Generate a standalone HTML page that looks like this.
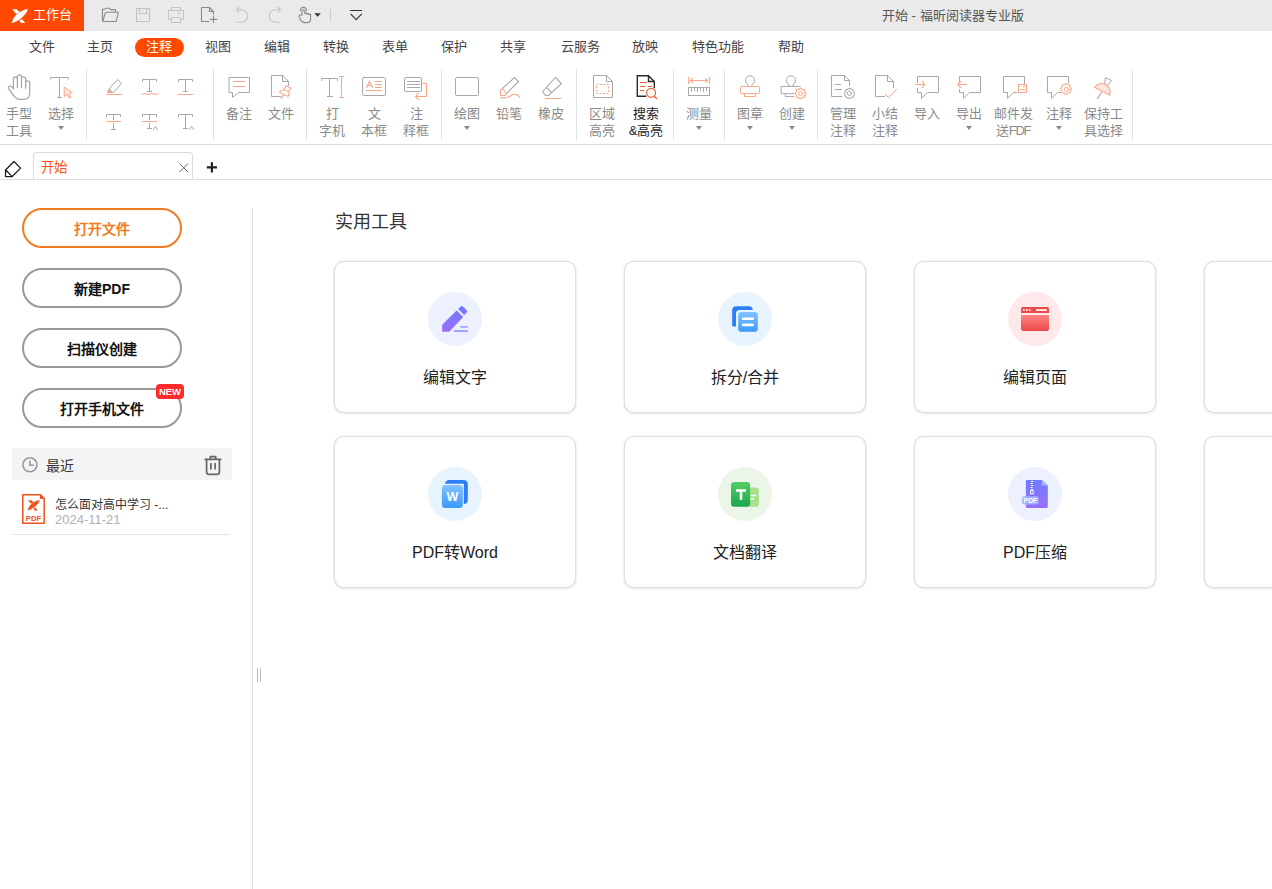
<!DOCTYPE html>
<html lang="zh-CN">
<head>
<meta charset="utf-8">
<style>
*{margin:0;padding:0;box-sizing:border-box}
html,body{width:1272px;height:889px;overflow:hidden;background:#fff;font-family:"Liberation Sans",sans-serif;}
.abs{position:absolute}
#title{position:absolute;left:0;top:0;width:1272px;height:31px;background:#eaeaea}
#brand{position:absolute;left:0;top:0;width:84px;height:31px;background:#ff4900;color:#fff;font-size:13px}
.t{position:absolute;white-space:nowrap;line-height:17px}
.menu{position:absolute;top:37px;font-size:13px;color:#444;line-height:19px;white-space:nowrap}
#ribbon{position:absolute;left:0;top:62px;width:1272px;height:83px;border-bottom:1px solid #dcdcdc}
.sep{position:absolute;top:7px;width:1px;height:71px;background:#e1e1e1}
.lb{position:absolute;font-size:13px;line-height:17px;color:#8a8a8a;text-align:center;white-space:nowrap}
.arr{position:absolute;width:0;height:0;border-left:3.5px solid transparent;border-right:3.5px solid transparent;border-top:4px solid #8a8a8a}
svg{position:absolute;overflow:visible}
.btn{position:absolute;left:22px;width:160px;height:40px;border:2px solid #999;border-radius:20px;font-size:14px;font-weight:bold;color:#111;text-align:center;line-height:38px}
.card{position:absolute;width:242px;height:152px;border:1px solid #e0e0e0;border-radius:10px;background:#fff;box-shadow:0 0 1.5px rgba(0,0,0,0.14),0 1px 3px rgba(0,0,0,0.08)}
.circ{position:absolute;width:54px;height:54px;border-radius:50%}
.cl{position:absolute;width:242px;text-align:center;font-size:16px;line-height:22px;color:#222;white-space:nowrap}

</style>
</head>
<body>
<div id="title">
  <div id="brand">
    <svg style="left:0;top:0" width="40" height="31" viewBox="0 0 40 31"><g fill="#fff">
<path d="M12.2 9.3 H16.6 L19.8 12.2 L16.2 14 Z"/>
<path d="M11.8 23.2 C12.6 17.5 18.5 10.8 27.9 9.1 C27 12.2 24.6 15.8 21.2 18.2 C18.6 20.2 15.2 22.2 11.8 23.2 Z"/>
<path d="M19.2 20.6 L22 19.2 L25.3 23.1 H21.2 Z"/>
</g></svg>
    <div class="t" style="left:33px;top:6px;font-size:13px;color:#fff">工作台</div>
  </div>
  
<svg style="left:0;top:0" width="1272" height="31" viewBox="0 0 1272 31">
 <g fill="none" stroke-width="1.1" stroke-linejoin="round">
  <!-- folder -->
  <path d="M102.5 21.5 V9.3 H104.5 L105.5 8.3 H109.5 L110.5 9.6 H115.5 V12.3" stroke="#8a8a8a"/>
  <path d="M102.5 21.5 H116.3 L118.3 12.3 H105.5 L102.8 21" stroke="#8a8a8a"/>
  <!-- save -->
  <rect x="136.5" y="8.5" width="13" height="13" stroke="#c2c2c2"/>
  <path d="M139.5 8.5 V13.5 H146.5 V8.5 M142.5 11 H143.5" stroke="#c2c2c2"/>
  <!-- print -->
  <path d="M171.5 10.5 V7.5 H180.5 V10.5 M171.5 19.5 H168.5 V10.5 H183.5 V19.5 H180.5" stroke="#c4c4c4"/>
  <rect x="171.5" y="17.5" width="9" height="5" stroke="#c4c4c4"/>
  <path d="M178 13.5 H180.5" stroke="#c4c4c4"/>
  <!-- new doc -->
  <path d="M209.5 21.5 H201.5 V7.5 H209.5 L213.5 11.5 V14.5 M209.5 7.5 V11.5 H213.5" stroke="#8a8a8a"/>
  <path d="M213.5 15.8 V23 M209.8 19.4 H217.2" stroke="#8a8a8a"/>
  <!-- undo -->
  <path d="M236.5 9.8 H241.5 A6.2 6.2 0 0 1 241.5 22.3 H236.5 M239.3 7 L236.5 9.8 L239.3 12.6" stroke="#c6c6c6"/>
  <!-- redo -->
  <path d="M280.5 9.8 H275.5 A6.2 6.2 0 0 0 275.5 22.3 H280.5 M277.7 7 L280.5 9.8 L277.7 12.6" stroke="#c6c6c6"/>
  <!-- hand -->
  <path d="M300.4 11.2 C300.4 6.1 306.5 6.1 306.5 11.2" stroke="#8a8a8a" stroke-width="1.1"/>
  <path d="M302.1 15.6 V11.2 A1.35 1.35 0 0 1 304.8 11.2 V14 M304.8 13.9 A1 1 0 0 1 306.8 14.2 V14.8 M306.8 14.3 A1 1 0 0 1 308.8 14.6 V15.2 M308.8 14.8 A0.9 0.9 0 0 1 310.6 15.2 V19.6 C310.6 21.6 309.4 22.6 307.4 22.6 H304.6 C302.6 22.6 301.2 21.4 300.3 19.6 L299.2 16.6 C298.9 15.6 299.6 14.8 300.5 14.8 C301.2 14.8 301.8 15.1 302.1 15.6" stroke="#8a8a8a" stroke-width="1.1"/>
  <path d="M314.3 13.2 H320.8 L317.55 16.8 Z" fill="#333" stroke="none"/>
  <path d="M330.5 9.5 V21.8" stroke="#cccccc"/>
  <!-- chevron -->
  <path d="M350 10.5 H362 M350.6 13.8 L356.2 19.6 L361.8 13.8" stroke="#333" stroke-width="1.2"/>
 </g>
</svg>
<div class="t" style="left:882px;top:7px;font-size:13px;color:#555">开始 - 福昕阅读器专业版</div>
</div>

<!-- menu -->
<div class="abs" style="left:134.5px;top:37.5px;width:49px;height:19.5px;border-radius:10px;background:#ff4800"></div>
<div class="menu" style="left:29px">文件</div>
<div class="menu" style="left:87px">主页</div>
<div class="menu" style="left:146px;color:#fff">注释</div>
<div class="menu" style="left:205px">视图</div>
<div class="menu" style="left:264px">编辑</div>
<div class="menu" style="left:323px">转换</div>
<div class="menu" style="left:382px">表单</div>
<div class="menu" style="left:441px">保护</div>
<div class="menu" style="left:500px">共享</div>
<div class="menu" style="left:561px">云服务</div>
<div class="menu" style="left:632px">放映</div>
<div class="menu" style="left:692px">特色功能</div>
<div class="menu" style="left:778px">帮助</div>

<div id="ribbon">
  <div class="sep" style="left:86px"></div>
  <div class="sep" style="left:213px"></div>
  <div class="sep" style="left:306px"></div>
  <div class="sep" style="left:441px"></div>
  <div class="sep" style="left:576px"></div>
  <div class="sep" style="left:673px"></div>
  <div class="sep" style="left:724px"></div>
  <div class="sep" style="left:817px"></div>
  <div class="sep" style="left:1132px"></div>

  <div class="lb" style="left:-1px;width:40px;top:43px">手型<br>工具</div>
  <div class="lb" style="left:41px;width:40px;top:43px">选择</div>
  <div class="arr" style="left:57.5px;top:64px"></div>
  <div class="lb" style="left:219px;width:40px;top:43px">备注</div>
  <div class="lb" style="left:261px;width:40px;top:43px">文件</div>
  <div class="lb" style="left:312px;width:40px;top:43px">打<br>字机</div>
  <div class="lb" style="left:354px;width:40px;top:43px">文<br>本框</div>
  <div class="lb" style="left:396px;width:40px;top:43px">注<br>释框</div>
  <div class="lb" style="left:447px;width:40px;top:43px">绘图</div>
  <div class="arr" style="left:463.5px;top:64px"></div>
  <div class="lb" style="left:489px;width:40px;top:43px">铅笔</div>
  <div class="lb" style="left:531px;width:40px;top:43px">橡皮</div>
  <div class="lb" style="left:582px;width:40px;top:43px">区域<br>高亮</div>
  <div class="lb" style="left:626px;width:40px;top:43px;color:#222">搜索<br>&amp;高亮</div>
  <div class="lb" style="left:679px;width:40px;top:43px">测量</div>
  <div class="arr" style="left:695.5px;top:64px"></div>
  <div class="lb" style="left:730px;width:40px;top:43px">图章</div>
  <div class="arr" style="left:746.5px;top:64px"></div>
  <div class="lb" style="left:772px;width:40px;top:43px">创建</div>
  <div class="arr" style="left:788.5px;top:64px"></div>
  <div class="lb" style="left:823px;width:40px;top:43px">管理<br>注释</div>
  <div class="lb" style="left:865px;width:40px;top:43px">小结<br>注释</div>
  <div class="lb" style="left:907px;width:40px;top:43px">导入</div>
  <div class="lb" style="left:949px;width:40px;top:43px">导出</div>
  <div class="arr" style="left:965.5px;top:64px"></div>
  <div class="lb" style="left:993px;width:40px;top:43px">邮件发<br>送<span style="letter-spacing:-1.2px">FDF</span></div>
  <div class="lb" style="left:1039px;width:40px;top:43px">注释</div>
  <div class="arr" style="left:1055.5px;top:64px"></div>
  <div class="lb" style="left:1083px;width:40px;top:43px">保持工<br>具选择</div>
</div>


<svg style="left:0;top:0" width="1272" height="150" viewBox="0 0 1272 150">
 <g fill="none" stroke="#a8a8a8" stroke-width="1" stroke-linejoin="miter" stroke-linecap="square">
  <!-- hand tool -->
  <path stroke-width="1.3" stroke-linejoin="round" d="M13.4 88.5 V79 A2 2 0 0 1 17.4 79 V87.5 M17.4 87.5 V77 A2 2 0 0 1 21.5 77 V87.5 M21.5 87.5 V79 A2 2 0 0 1 25.6 79 V88 M25.6 88 V83 A2 2 0 0 1 29.7 83 V93 C29.7 97 27.5 99.4 23.5 99.4 H19.5 C17 99.4 15.5 98.2 14 96 L8.6 88.6 C8 87.6 8.6 86.2 10 86.2 C11 86.2 12.3 87 13.4 88.5"/>
  <!-- select T -->
  <path d="M50.5 79 V77.5 H68.5 V79 M59.5 77.5 V97.5 M57.5 97.5 H61.5"/>
  <path d="M64.5 87.3 L72.3 92.5 L69.3 93.3 L70.7 97.3 L69.2 98.2 L67.7 94.3 L64.8 96.3 Z" stroke="#f9a689" fill="#fde9e2" stroke-linejoin="round"/>
  <!-- highlighter -->
  <path d="M109.5 88.5 L117.5 79.5 L121.5 83.5 L113.5 92.5 Z M109.5 88.5 L107.5 92.5 H111.5" />
  <path d="M108.5 92.5 L109.5 89.5 L111.5 91.5 Z" fill="#f9a689" stroke="#f9a689" stroke-width="0.8"/>
  <path d="M106.5 94.5 H121.5" stroke="#f9a689"/>
  <!-- T squiggle -->
  <path d="M142.5 81.5 V79.5 H156.5 V81.5 M149.5 79.5 V91.5 M147.5 91.5 H151.5"/>
  <path d="M142.3 94.5 Q144.2 92.8 146.1 94 T150 94 T153.9 94 T157.8 94" stroke="#f9a689" stroke-width="1"/>
  <!-- T underline -->
  <path d="M178.5 81.5 V79.5 H192.5 V81.5 M185.5 79.5 V91.5 M183.5 91.5 H187.5"/>
  <path d="M178.5 94.5 H192.5" stroke="#f9a689"/>
  <!-- strikeout T -->
  <path d="M106.5 116.5 V114.5 H120.5 V116.5 M113.5 114.5 V119.5 M113.5 123.5 V129.5 M111.5 129.5 H115.5"/>
  <path d="M106.5 121.5 H120.5" stroke="#f9a689"/>
  <!-- replace T -->
  <path d="M142.5 116.5 V114.5 H156.5 V116.5 M149.5 114.5 V119.5 M149.5 123.5 V128.5 M147.5 128.5 H151.5 M153.5 129.5 L155.5 126.5 L157.5 129.5"/>
  <path d="M142.5 121.5 H156.5" stroke="#f9a689"/>
  <!-- insert T -->
  <path d="M178.5 116.5 V114.5 H192.5 V116.5 M185.5 114.5 V128.5 M183.5 128.5 H187.5 M189.5 129.5 L191.5 126.5 L193.5 129.5"/>
  <!-- note -->
  <path d="M229.5 77.5 H249.5 V92.5 H238.5 L232.5 97.5 V92.5 H229.5 Z"/>
  <path d="M233.5 81.5 H244.5 M233.5 86.5 H244.5" stroke="#f9a689"/>
  <!-- file attach -->
  <path d="M280.5 96.5 H271.5 V75.5 H282.5 L288.5 81.5 V85.5 M282.5 75.5 V81.5 H288.5"/>
  <path d="M286.2 85.6 L290.8 88.3 L288.6 91.5 M284.2 89 L286.2 85.6 M279.5 91.5 C281 89.5 285 89.6 288.6 91.5 C289.5 93.5 289 95.5 288 96.3 C285 95.5 281 94 279.5 91.5 Z M283.4 95 L281.3 98.6" stroke="#f9a689" stroke-width="1.1"/>
  <!-- typewriter -->
  <path d="M321.5 80.5 V78.5 H337.5 V80.5 M329.5 78.5 V96.5 M327.5 96.5 H332.5"/>
  <path d="M341.5 76.5 V97.5 M339.5 76.5 H343.5 M339.5 97.5 H343.5" stroke="#f9a689"/>
  <!-- textbox -->
  <rect x="362.5" y="77.5" width="23" height="18" rx="1.3"/>
  <path d="M366.5 87.5 L369.5 81.5 L372.5 87.5 M367.5 85.5 H371.5 M375.5 81.5 H381.5 M375.5 84.5 H381.5 M375.5 87.5 H381.5 M366.5 90.5 H381.5" stroke="#f9a689" stroke-width="1.1"/>
  <!-- callout -->
  <rect x="404.5" y="77.5" width="17" height="14" rx="1.3"/>
  <path d="M407.5 81.5 H419.5 M407.5 84.5 H419.5 M407.5 87.5 H419.5" stroke-width="1.1"/>
  <path d="M421.5 83.5 H426.5 V96.5 H415.5 M418.5 93.5 L415.5 96.5 L418.5 99.5" stroke="#f9a689" stroke-width="1.1"/>
  <!-- rect draw -->
  <rect x="455.5" y="77.5" width="23" height="18" rx="1.3"/>
  <!-- pencil -->
  <path d="M502.5 88.5 L514.5 77.5 L518.5 81.5 L506.5 93.5" stroke-width="1.1"/>
  <path d="M502.5 88.5 L500.5 90.5 V95.5 H505.5 L506.5 93.5 Z" stroke="#f9a689" stroke-width="1.1"/>
  <path d="M501 97.6 C505 98.5 508 97.5 511 95.5 C514 93.5 517.5 93.8 519.8 97.3" stroke="#f9a689" stroke-width="1.1"/>
  <!-- eraser -->
  <path d="M542.5 91.5 L555.5 77.5 L561.5 83.5 L548.5 95.5 H545.5 Z M546.5 87.5 L551.5 92.5" stroke-width="1.1"/>
  <path d="M545.5 98.5 H560.5" stroke="#f9a689"/>
  <!-- area highlight -->
  <path d="M606.5 75.5 H593.5 V97.5 H612.5 V81.5 L606.5 75.5 V81.5 H612.5"/>
  <rect x="596.5" y="84.5" width="12" height="9" stroke="#f9a689" stroke-dasharray="2 1.5" stroke-linecap="butt" stroke-width="1"/>
  <!-- search highlight -->
  <path d="M645.5 96.3 H637.3 V75.7 H648.5 L654.3 81.5 V87.5 M648.5 75.7 V81.5 H654.3" stroke="#2a2a2a" stroke-width="1.4"/>
  <path d="M640.5 82.5 H646.5 M640.5 86.5 H644.5 M648.5 86.5 H651.5 M640.5 90.5 H643.5" stroke="#f25a2a" stroke-width="1.2"/>
  <circle cx="651.1" cy="92.9" r="4.4" stroke="#f25a2a" stroke-width="1.2"/>
  <path d="M654.5 96.5 L656.5 98.5" stroke="#f25a2a" stroke-width="1.3"/>
  <!-- measure -->
  <path d="M688.5 77.5 V83.5 M709.5 77.5 V83.5 M690.5 80.5 H707.5 M692.5 78.5 L690.5 80.5 L692.5 82.5 M705.5 78.5 L707.5 80.5 L705.5 82.5" stroke="#f9a689" stroke-width="1.1"/>
  <rect x="688.5" y="87.5" width="21" height="8"/>
  <path d="M691.5 87.5 V91.5 M694.5 87.5 V90.5 M697.5 87.5 V91.5 M700.5 87.5 V90.5 M703.5 87.5 V91.5 M706.5 87.5 V90.5" stroke-width="1"/>
  <!-- stamp -->
  <path d="M748 86.4 V84.5 A4.6 4.6 0 1 1 752 84.5 V86.4"/>
  <rect x="740.5" y="86.5" width="19" height="7" rx="1.2" stroke="#f9a689"/>
  <path d="M744.5 93.5 V96.5 H755.5 V93.5" stroke="#f9a689"/>
  <!-- create stamp -->
  <path d="M789 86.4 V84.5 A4.6 4.6 0 1 1 793 84.5 V86.4 M800.4 86.4 H781.2 V93.7 H793.8 M785.3 93.7 V96.6 H793.8"/>
  <path d="M805.80 93.50 L805.74 93.84 L805.56 94.17 L805.31 94.46 L805.04 94.72 L804.81 94.96 L804.66 95.22 L804.58 95.51 L804.57 95.85 L804.57 96.22 L804.55 96.60 L804.44 96.96 L804.25 97.25 L803.96 97.44 L803.60 97.55 L803.22 97.57 L802.85 97.57 L802.51 97.58 L802.22 97.66 L801.96 97.81 L801.72 98.04 L801.46 98.31 L801.17 98.56 L800.84 98.74 L800.50 98.80 L800.16 98.74 L799.83 98.56 L799.54 98.31 L799.28 98.04 L799.04 97.81 L798.78 97.66 L798.49 97.58 L798.15 97.57 L797.78 97.57 L797.40 97.55 L797.04 97.44 L796.75 97.25 L796.56 96.96 L796.45 96.60 L796.43 96.22 L796.43 95.85 L796.42 95.51 L796.34 95.22 L796.19 94.96 L795.96 94.72 L795.69 94.46 L795.44 94.17 L795.26 93.84 L795.20 93.50 L795.26 93.16 L795.44 92.83 L795.69 92.54 L795.96 92.28 L796.19 92.04 L796.34 91.78 L796.42 91.49 L796.43 91.15 L796.43 90.78 L796.45 90.40 L796.56 90.04 L796.75 89.75 L797.04 89.56 L797.40 89.45 L797.78 89.43 L798.15 89.43 L798.49 89.42 L798.78 89.34 L799.04 89.19 L799.28 88.96 L799.54 88.69 L799.83 88.44 L800.16 88.26 L800.50 88.20 L800.84 88.26 L801.17 88.44 L801.46 88.69 L801.72 88.96 L801.96 89.19 L802.22 89.34 L802.51 89.42 L802.85 89.43 L803.22 89.43 L803.60 89.45 L803.96 89.56 L804.25 89.75 L804.44 90.04 L804.55 90.40 L804.57 90.78 L804.57 91.15 L804.58 91.49 L804.66 91.78 L804.81 92.04 L805.04 92.28 L805.31 92.54 L805.56 92.83 L805.74 93.16 Z" stroke="#f9a689" stroke-width="1.1"/>
  <circle cx="800.5" cy="93.5" r="2.1" stroke="#f9a689"/>
  <!-- manage -->
  <path d="M841.5 96.5 H831.5 V75.5 H844.5 L849.5 80.5 V85.5 M844.5 75.5 V80.5 H849.5 M835.5 84.5 H840.5 M835.5 89.5 H841.5"/>
  <circle cx="849.5" cy="93.4" r="4.8" stroke-width="1.1"/>
  <circle cx="849.4" cy="93.4" r="2.1"/>
  <!-- summary -->
  <path d="M884.5 96.5 H875.5 V75.5 H887.5 L893.5 81.5 V87.5 M887.5 75.5 V81.5 H893.5"/>
  <path d="M885.5 94.5 L888.5 97.5 L896.5 89.5" stroke="#f9a689"/>
  <!-- import -->
  <path d="M917.5 82.5 V76.5 H938.5 V92.5 H927.5 L921.5 98.5 V92.5 H917.5 V88.5"/>
  <path d="M915.5 84.5 H924.5 M922.5 81.5 L924.5 84.5 L922.5 87.5" stroke="#f9a689" stroke-width="1.1"/>
  <!-- export -->
  <path d="M959.5 82.5 V76.5 H980.5 V92.5 H969.5 L963.5 98.5 V92.5 H959.5 V89.5"/>
  <path d="M957.5 84.5 H966.5 M960.5 81.5 L957.5 84.5 L960.5 87.5" stroke="#f9a689" stroke-width="1.1"/>
  <!-- email -->
  <path d="M1024.5 83.5 V76.5 H1003.5 V92.5 H1007.5 V98.5 L1013.5 92.5 H1016.5"/>
  <rect x="1018.5" y="84.5" width="8" height="8" stroke="#f9a689" stroke-width="1.1"/>
  <path d="M1020.5 89.5 H1024.5 M1023.5 86.5 H1024.5" stroke="#f9a689" stroke-width="1.1"/>
  <!-- comment settings -->
  <path d="M1068.5 82.5 V76.5 H1047.5 V92.5 H1051.5 V98.5 L1057.5 92.5 H1060.5"/>
  <path d="M1071.30 89.00 L1071.24 89.34 L1071.06 89.67 L1070.81 89.96 L1070.54 90.22 L1070.31 90.46 L1070.16 90.72 L1070.08 91.01 L1070.07 91.35 L1070.07 91.72 L1070.05 92.10 L1069.94 92.46 L1069.75 92.75 L1069.46 92.94 L1069.10 93.05 L1068.72 93.07 L1068.35 93.07 L1068.01 93.08 L1067.72 93.16 L1067.46 93.31 L1067.22 93.54 L1066.96 93.81 L1066.67 94.06 L1066.34 94.24 L1066.00 94.30 L1065.66 94.24 L1065.33 94.06 L1065.04 93.81 L1064.78 93.54 L1064.54 93.31 L1064.28 93.16 L1063.99 93.08 L1063.65 93.07 L1063.28 93.07 L1062.90 93.05 L1062.54 92.94 L1062.25 92.75 L1062.06 92.46 L1061.95 92.10 L1061.93 91.72 L1061.93 91.35 L1061.92 91.01 L1061.84 90.72 L1061.69 90.46 L1061.46 90.22 L1061.19 89.96 L1060.94 89.67 L1060.76 89.34 L1060.70 89.00 L1060.76 88.66 L1060.94 88.33 L1061.19 88.04 L1061.46 87.78 L1061.69 87.54 L1061.84 87.28 L1061.92 86.99 L1061.93 86.65 L1061.93 86.28 L1061.95 85.90 L1062.06 85.54 L1062.25 85.25 L1062.54 85.06 L1062.90 84.95 L1063.28 84.93 L1063.65 84.93 L1063.99 84.92 L1064.28 84.84 L1064.54 84.69 L1064.78 84.46 L1065.04 84.19 L1065.33 83.94 L1065.66 83.76 L1066.00 83.70 L1066.34 83.76 L1066.67 83.94 L1066.96 84.19 L1067.22 84.46 L1067.46 84.69 L1067.72 84.84 L1068.01 84.92 L1068.35 84.93 L1068.72 84.93 L1069.10 84.95 L1069.46 85.06 L1069.75 85.25 L1069.94 85.54 L1070.05 85.90 L1070.07 86.28 L1070.07 86.65 L1070.08 86.99 L1070.16 87.28 L1070.31 87.54 L1070.54 87.78 L1070.81 88.04 L1071.06 88.33 L1071.24 88.66 Z" stroke="#f9a689" stroke-width="1.1"/>
  <circle cx="1066.3" cy="89.4" r="2.1" stroke="#f9a689"/>
  <!-- keep tool -->
  <path d="M1104.5 84.5 L1105.5 77.5 L1111.5 80.5 L1107.5 85.5" stroke-width="1"/>
  <path d="M1094.6 87.2 C1097 83.5 1102 82.5 1106 84.5 C1109.5 86.5 1111 91.5 1109.7 95.3 Z" stroke="#f9a689" fill="#fde6de" stroke-width="1.1"/>
  <path d="M1101.5 92.5 L1097.5 98.5" stroke-width="1.1"/>
 </g>
</svg>

<!-- tab bar -->
<div class="abs" style="left:33px;top:152px;width:160px;height:28px;border:1px solid #dcdcdc;border-bottom:none;border-radius:4px 4px 0 0;background:#fff"></div>
<div class="abs" style="left:0;top:179px;width:1272px;height:1px;background:#dcdcdc"></div>
<div class="t" style="left:40.5px;top:159px;font-size:13.5px;color:#ff5514">开始</div>
<svg style="left:0;top:150px" width="230" height="32" viewBox="0 150 230 32">
 <g fill="none" stroke-linejoin="round">
  <path d="M5.5 176.5 V170 L14 161.5 L20.6 168.1 L12.2 176.5 Z M6 170.3 L11.6 175.9" stroke="#1a1a1a" stroke-width="1.25"/>
  <path d="M179.5 163.5 L188 172 M188 163.5 L179.5 172" stroke="#666" stroke-width="1"/>
  <path d="M206.8 167.4 H217 M211.9 162.3 V172.5" stroke="#222" stroke-width="2.2"/>
 </g>
</svg>

<!-- left panel -->
<div class="btn" style="top:208px;border-color:#f27a20;color:#f27a20">打开文件</div>
<div class="btn" style="top:268px">新建PDF</div>
<div class="btn" style="top:328px">扫描仪创建</div>
<div class="btn" style="top:388px">打开手机文件</div>
<div class="abs" style="left:156px;top:384px;width:28px;height:15px;background:#fe2b2b;border-radius:4px;color:#fff;font-size:9.5px;font-weight:bold;line-height:16px;text-align:center;font-family:'Liberation Sans',sans-serif">NEW</div>

<div class="abs" style="left:12px;top:448px;width:220px;height:32px;background:#f4f4f4;border-radius:4px"></div>
<div class="t" style="left:46px;top:457.5px;font-size:14px;color:#333">最近</div>
<svg style="left:0;top:440px" width="240" height="100" viewBox="0 440 240 100">
 <g fill="none" stroke="#999" stroke-width="1.6">
  <circle cx="29.9" cy="464.8" r="7"/>
  <path d="M29.9 460.5 V465.3 H33.8"/>
 </g>
 <g fill="none" stroke="#666" stroke-width="1.7" stroke-linejoin="round">
  <path d="M204.6 459.4 H221.4 M210.3 459 V456.6 H215.7 V459"/>
  <path d="M206.6 459.4 V472 Q206.6 474.4 209 474.4 H217 Q219.4 474.4 219.4 472 V459.4"/>
  <path d="M210.9 463 V469.5 M215.1 463 V469.5"/>
 </g>
 <!-- pdf file icon -->
 <path d="M22.8 494.8 H40.5 L44.2 498.5 V523.2 H22.8 Z" fill="#fff" stroke="#ef521d" stroke-width="1.5" stroke-linejoin="round"/>
 <path d="M40.5 494.8 V498.5 H44.2" fill="#ef521d" stroke="#ef521d" stroke-width="1"/>
 <g transform="translate(18.85 493.2) scale(0.75)" fill="#ef521d">
<path d="M12.2 9.3 H16.6 L19.8 12.2 L16.2 14 Z"/>
<path d="M11.8 23.2 C12.6 17.5 18.5 10.8 27.9 9.1 C27 12.2 24.6 15.8 21.2 18.2 C18.6 20.2 15.2 22.2 11.8 23.2 Z"/>
<path d="M19.2 20.6 L22 19.2 L25.3 23.1 H21.2 Z"/>
</g>
 <text x="33.5" y="520.5" text-anchor="middle" font-size="7.8" font-weight="bold" fill="#ef521d" font-family="Liberation Sans" textLength="15.6" lengthAdjust="spacingAndGlyphs">PDF</text>
</svg>
<div class="t" style="left:55px;top:497px;font-size:12px;color:#333">怎么面对高中学习 -...</div>
<div class="t" style="left:55px;top:511px;font-size:13px;color:#b0b0b0">2024-11-21</div>
<div class="abs" style="left:12px;top:534px;width:218px;height:1px;background:#e6e6e6"></div>

<div class="abs" style="left:252px;top:208px;width:1px;height:681px;background:#dedede"></div>
<div class="abs" style="left:257px;top:668px;width:1px;height:14px;background:#bbb"></div>
<div class="abs" style="left:260px;top:668px;width:1px;height:14px;background:#bbb"></div>

<!-- main -->
<div class="t" style="left:335px;top:210px;font-size:18px;line-height:24px;color:#333">实用工具</div>
<div class="card" style="left:334px;top:261px"></div>
<div class="card" style="left:624px;top:261px"></div>
<div class="card" style="left:914px;top:261px"></div>
<div class="card" style="left:1204px;top:261px"></div>
<div class="card" style="left:334px;top:436px"></div>
<div class="card" style="left:624px;top:436px"></div>
<div class="card" style="left:914px;top:436px"></div>
<div class="card" style="left:1204px;top:436px"></div>

<div class="circ" style="left:428px;top:292px;background:#edf0fe"></div>
<div class="circ" style="left:718px;top:292px;background:#e7f4fd"></div>
<div class="circ" style="left:1008px;top:292px;background:#fde9ea"></div>
<div class="circ" style="left:428px;top:467px;background:#e7f4fd"></div>
<div class="circ" style="left:718px;top:467px;background:#ebf6e9"></div>
<div class="circ" style="left:1008px;top:467px;background:#edf0fe"></div>


<svg style="left:0;top:0" width="1272" height="600" viewBox="0 0 1272 600">
 <defs>
  <linearGradient id="gp" x1="0" y1="0" x2="0" y2="1"><stop offset="0" stop-color="#6f7cff"/><stop offset="1" stop-color="#9b6df7"/></linearGradient>
  <linearGradient id="gb" x1="0" y1="0" x2="0" y2="1"><stop offset="0" stop-color="#82c2ff"/><stop offset="1" stop-color="#3a99fa"/></linearGradient>
  <linearGradient id="gr" x1="0" y1="0" x2="0" y2="1"><stop offset="0" stop-color="#fb8585"/><stop offset="1" stop-color="#ee4747"/></linearGradient>
  <linearGradient id="gg" x1="0" y1="0" x2="0" y2="1"><stop offset="0" stop-color="#52cf64"/><stop offset="1" stop-color="#19a74e"/></linearGradient>
  <linearGradient id="gz" x1="0" y1="0" x2="0" y2="1"><stop offset="0" stop-color="#6f7cff"/><stop offset="1" stop-color="#9a70f8"/></linearGradient>
 </defs>
 <!-- edit text pencil: circle origin (428,292) -->
 <g transform="translate(425 289)">
  <path d="M17.2 35.8 L31.6 21.5 L38.2 28.1 L24.2 42.8 H17.2 Z" fill="url(#gp)"/>
  <path d="M33.1 20 L35.6 17.5 Q36.8 16.3 38 17.5 L41.7 21.2 Q42.9 22.4 41.7 23.6 L39.2 26.1 Z" fill="#7579ff"/>
  <path d="M35.1 37 H42.8 V38.8 H35.1 Z M29 41.1 H42.8 V42.9 H29 Z" fill="#9aa6ff"/>
 </g>
 <!-- split/merge -->
 <g transform="translate(715 289)">
  <path d="M17.2 37 V21.5 Q17.2 17.2 21.5 17.2 H33.5 Q37.8 17.2 37.8 21 L34 21 H24.5 Q21 21 21 24.5 V37.5 Q17.2 37.5 17.2 37 Z" fill="#2b7ef9"/>
  <rect x="23.2" y="23" width="19.6" height="19.8" rx="3" fill="url(#gb)"/>
  <rect x="26.7" y="28.4" width="12.4" height="2.6" rx="1.3" fill="#fff"/>
  <rect x="26.7" y="34.6" width="12.4" height="2.6" rx="1.3" fill="#fff"/>
 </g>
 <!-- edit page -->
 <g transform="translate(1005 289)">
  <path d="M16 24 V20 Q16 17.9 18 17.9 H42 Q44 17.9 44 20 V24 Z" fill="#ee4a4a"/>
  <rect x="17.9" y="20.2" width="1.7" height="1.7" fill="#fff"/>
  <rect x="20.8" y="20.2" width="1.7" height="1.7" fill="#fff"/>
  <rect x="23.8" y="20.2" width="1.7" height="1.7" fill="#fff"/>
  <rect x="31" y="20.2" width="10.8" height="1.7" fill="#fff"/>
  <path d="M16 26 H44 V39.8 Q44 41.9 42 41.9 H18 Q16 41.9 16 39.8 Z" fill="url(#gr)"/>
 </g>
 <!-- PDF to word -->
 <g transform="translate(425 464)">
  <path d="M19.9 19.8 Q20.5 15.9 24.5 15.9 H38.2 Q42.8 15.9 42.8 20.5 V36 Q42.8 40 38.8 40.1 L38.8 19.8 Z" fill="#2b7ef9"/>
  <rect x="16.9" y="20.9" width="20.9" height="23" rx="3.5" fill="url(#gb)"/>
  <text x="27.4" y="37.2" text-anchor="middle" font-family="Liberation Sans" font-weight="bold" font-size="12.5" fill="#fff">W</text>
 </g>
 <!-- translate -->
 <g transform="translate(715 464)">
  <rect x="31" y="23.6" width="12.9" height="19.2" rx="2.8" fill="#a9e08d"/>
  <rect x="16" y="17.9" width="19.1" height="24.9" rx="3.3" fill="url(#gg)"/>
  <path d="M21 25.3 H31 V27.7 H27.3 V35.8 H24.7 V27.7 H21 Z" fill="#fff"/>
  <rect x="35.6" y="30.8" width="5.5" height="1.5" fill="#fff"/>
  <rect x="35.6" y="34.2" width="3" height="1.5" fill="#fff"/>
 </g>
 <!-- compress -->
 <g transform="translate(1005 464)">
  <path d="M20.9 17 Q20.9 15.9 22 15.9 H36.8 L42.8 21.6 V42.8 Q42.8 43.9 41.7 43.9 H22 Q20.9 43.9 20.9 42.8 Z" fill="url(#gz)"/>
  <path d="M36.8 15.9 V21.6 H42.8 Z" fill="#a7b3ff"/>
  <path d="M26 17.5 H28 M25.5 19.5 H27.5 M26 21.5 H28 M25.5 23.5 H27.5 M26 25.5 H28" stroke="#fff" stroke-width="1.1"/>
  <rect x="25.6" y="26.6" width="2.6" height="3.2" fill="none" stroke="#fff" stroke-width="0.9"/>
  <rect x="17.2" y="32.3" width="16.5" height="8.2" rx="2" fill="#a3b1fe"/>
  <text x="25.4" y="39.2" text-anchor="middle" font-family="Liberation Sans" font-weight="bold" font-size="6.8" fill="#fff">PDF</text>
 </g>
</svg>
<div class="cl" style="left:334px;top:367px">编辑文字</div>
<div class="cl" style="left:624px;top:367px">拆分/合并</div>
<div class="cl" style="left:914px;top:367px">编辑页面</div>
<div class="cl" style="left:334px;top:542px">PDF转Word</div>
<div class="cl" style="left:624px;top:542px">文档翻译</div>
<div class="cl" style="left:914px;top:542px">PDF压缩</div>
</body>
</html>
